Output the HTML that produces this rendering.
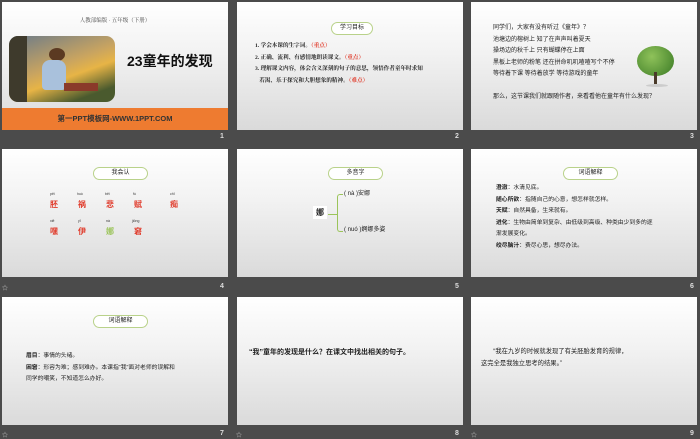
<!DOCTYPE html>
<html><head><meta charset="utf-8"><style>
*{margin:0;padding:0;box-sizing:border-box}
body{width:700px;height:438px;background:#4b4b4b;position:relative;overflow:hidden;font-family:"Liberation Sans","Noto Sans CJK SC",sans-serif;color:#222}
.s{position:absolute;width:226px;height:128px;background:linear-gradient(#fff,#f2f2f2 40%,#dadada);overflow:hidden}
.s div{position:absolute}
.n{position:absolute;color:#ddd;font-size:7px;font-weight:bold}
.p{border:1.5px solid #b9d28a;border-radius:8px;background:#fff;font-size:6px;text-align:center;line-height:10px;height:13px}
.t{font-size:6px;line-height:11.5px;white-space:nowrap}
.r{color:#e03a2a}
.i{position:absolute;color:#ccc;font-size:6px}
</style></head><body>
<div class="s" style="left:2px;top:2px">
<div style="left:0;width:226px;top:14px;text-align:center;font-size:5.5px;font-family:'Liberation Serif','Noto Serif CJK SC',serif;color:#444">人教部编版 · 五年级（下册）</div>
<div style="left:7px;top:34px;width:106px;height:66px;border-radius:9px;background:linear-gradient(160deg,#6a7a8a,#c9a460 45%,#e7b446 60%,#4a5a2e 85%);overflow:hidden">
<div style="left:0;top:0;width:18px;height:66px;background:#3e3a2c"></div>
<div style="left:40px;top:12px;width:16px;height:13px;border-radius:50%;background:#5b3a22"></div>
<div style="left:33px;top:24px;width:24px;height:30px;border-radius:8px 8px 4px 4px;background:#a9c1dc"></div>
<div style="left:55px;top:47px;width:34px;height:8px;background:#8a3a2a"></div>
</div>
<div style="left:125px;top:49px;font-size:14px;font-weight:bold;color:#111">23童年的发现</div>
<div style="left:0;top:106px;width:226px;height:22px;background:#ee7b30;text-align:center;line-height:22px;font-size:7.5px;font-weight:bold;color:#333">第一PPT模板网-WWW.1PPT.COM</div>
</div>
<div class="n" style="left:220px;top:133px">1</div>
<div class="s" style="left:237px;top:2px">
<div class="p" style="left:94px;top:20px;width:42px">学习目标</div>
<div class="t" style="left:18px;top:39px;font-weight:bold;font-family:'Liberation Serif','Noto Serif CJK SC',serif;font-size:5.6px">1. 学会本课的生字词。<span class="r">（重点）</span><br>2. 正确、流利、有感情地朗读课文。<span class="r">（重点）</span><br>3. 理解课文内容，体会含义深刻的句子的意思，领悟作者童年时求知<br>&nbsp;&nbsp;&nbsp;若渴、乐于探究和大胆想象的精神。<span class="r">（难点）</span></div>
</div>
<div class="n" style="left:455px;top:133px">2</div>
<div class="s" style="left:471px;top:2px">
<div class="t" style="left:22px;top:21px;font-size:6px">同学们，大家有没有听过《童年》？<br>池塘边的榕树上 知了在声声叫着夏天<br>操场边的秋千上 只有蝴蝶停在上面<br>黑板上老师的粉笔 还在拼命叽叽喳喳写个不停<br>等待着下课 等待着放学 等待游戏的童年<br><br>那么，这节课我们就跟随作者，来看看他在童年有什么发现？</div>
<div style="left:166px;top:44px;width:37px;height:30px;border-radius:50%;background:radial-gradient(circle at 40% 35%,#8fc25a,#3a7a25)"></div>
<div style="left:183px;top:70px;width:3px;height:12px;background:#4a3a2a"></div>
<div style="left:175px;top:82px;width:22px;height:3px;border-radius:50%;background:#ccc"></div>
</div>
<div class="n" style="left:690px;top:133px">3</div>
<div class="s" style="left:2px;top:149px">
<div class="p" style="left:91px;top:18px;width:55px">我会认</div>
<div style="left:48px;top:43px;width:140px;font-size:3.5px;color:#333">
<span style="position:absolute;left:0">pēi</span><span style="position:absolute;left:27px">huò</span><span style="position:absolute;left:55px">bēi</span><span style="position:absolute;left:83px">fù</span><span style="position:absolute;left:120px">chī</span></div>
<div style="left:48px;top:50px;width:150px;font-size:8px;font-weight:bold" class="r">
<span style="position:absolute;left:0">胚</span><span style="position:absolute;left:28px">祸</span><span style="position:absolute;left:56px">悲</span><span style="position:absolute;left:84px">赋</span><span style="position:absolute;left:120px">痴</span></div>
<div style="left:48px;top:70px;width:140px;font-size:3.5px;color:#333">
<span style="position:absolute;left:0">xiē</span><span style="position:absolute;left:28px">yī</span><span style="position:absolute;left:56px">nà</span><span style="position:absolute;left:82px">jiǒng</span></div>
<div style="left:48px;top:77px;width:150px;font-size:8px;font-weight:bold" class="r">
<span style="position:absolute;left:0">嘿</span><span style="position:absolute;left:28px">伊</span><span style="position:absolute;left:56px;color:#9bc45a">娜</span><span style="position:absolute;left:84px">窘</span></div>
</div>
<div class="i" style="left:2px;top:283px">☆</div>
<div class="n" style="left:220px;top:283px">4</div>
<div class="s" style="left:237px;top:149px">
<div class="p" style="left:91px;top:18px;width:55px">多音字</div>
<div style="left:76px;top:57px;background:#fff;padding:1px 3px;font-size:8px;font-weight:bold">娜</div>
<div style="left:91px;top:65px;width:9px;border-top:1px solid #9bc45a"></div>
<div style="left:100px;top:45px;width:6px;height:38px;border:1px solid #9bc45a;border-right:none;border-radius:3px 0 0 3px"></div>
<div class="t" style="left:107px;top:40px">( nà )安娜</div>
<div class="t" style="left:107px;top:76px">( nuó )婀娜多姿</div>
</div>
<div class="n" style="left:455px;top:283px">5</div>
<div class="s" style="left:471px;top:149px">
<div class="p" style="left:92px;top:18px;width:55px">词语解释</div>
<div class="t" style="left:25px;top:34px;font-size:5.8px"><b>澄澈</b>：水清见底。<br><b>随心所欲</b>：指随自己的心意，想怎样就怎样。<br><b>天赋</b>：自然具备，生来就有。<br><b>进化</b>：生物由简单到复杂、由低级到高级、种类由少到多的逐<br>渐发展变化。<br><b>绞尽脑汁</b>：费尽心思，想尽办法。</div>
</div>
<div class="n" style="left:690px;top:283px">6</div>
<div class="s" style="left:2px;top:297px">
<div class="p" style="left:91px;top:18px;width:55px">词语解释</div>
<div class="t" style="left:24px;top:54px;font-size:5.8px"><b>眉目</b>：事情的头绪。<br><b>困窘</b>：形容为难；感到难办。本课指“我”面对老师的误解和<br>同学的嘲笑，不知道怎么办好。</div>
</div>
<div class="i" style="left:2px;top:430px">☆</div>
<div class="n" style="left:220px;top:430px">7</div>
<div class="s" style="left:237px;top:297px">
<div class="t" style="left:12px;top:50px;font-size:7px;font-weight:bold">“我”童年的发现是什么？在课文中找出相关的句子。</div>
</div>
<div class="i" style="left:236px;top:430px">☆</div>
<div class="n" style="left:455px;top:430px">8</div>
<div class="s" style="left:471px;top:297px">
<div class="t" style="left:10px;top:49px;font-size:6.3px;line-height:12px">&nbsp;&nbsp;&nbsp;&nbsp;&nbsp;&nbsp;&nbsp;“我在九岁的时候就发现了有关胚胎发育的规律，<br>这完全是我独立思考的结果。”</div>
</div>
<div class="i" style="left:471px;top:430px">☆</div>
<div class="n" style="left:690px;top:430px">9</div>
</body></html>
